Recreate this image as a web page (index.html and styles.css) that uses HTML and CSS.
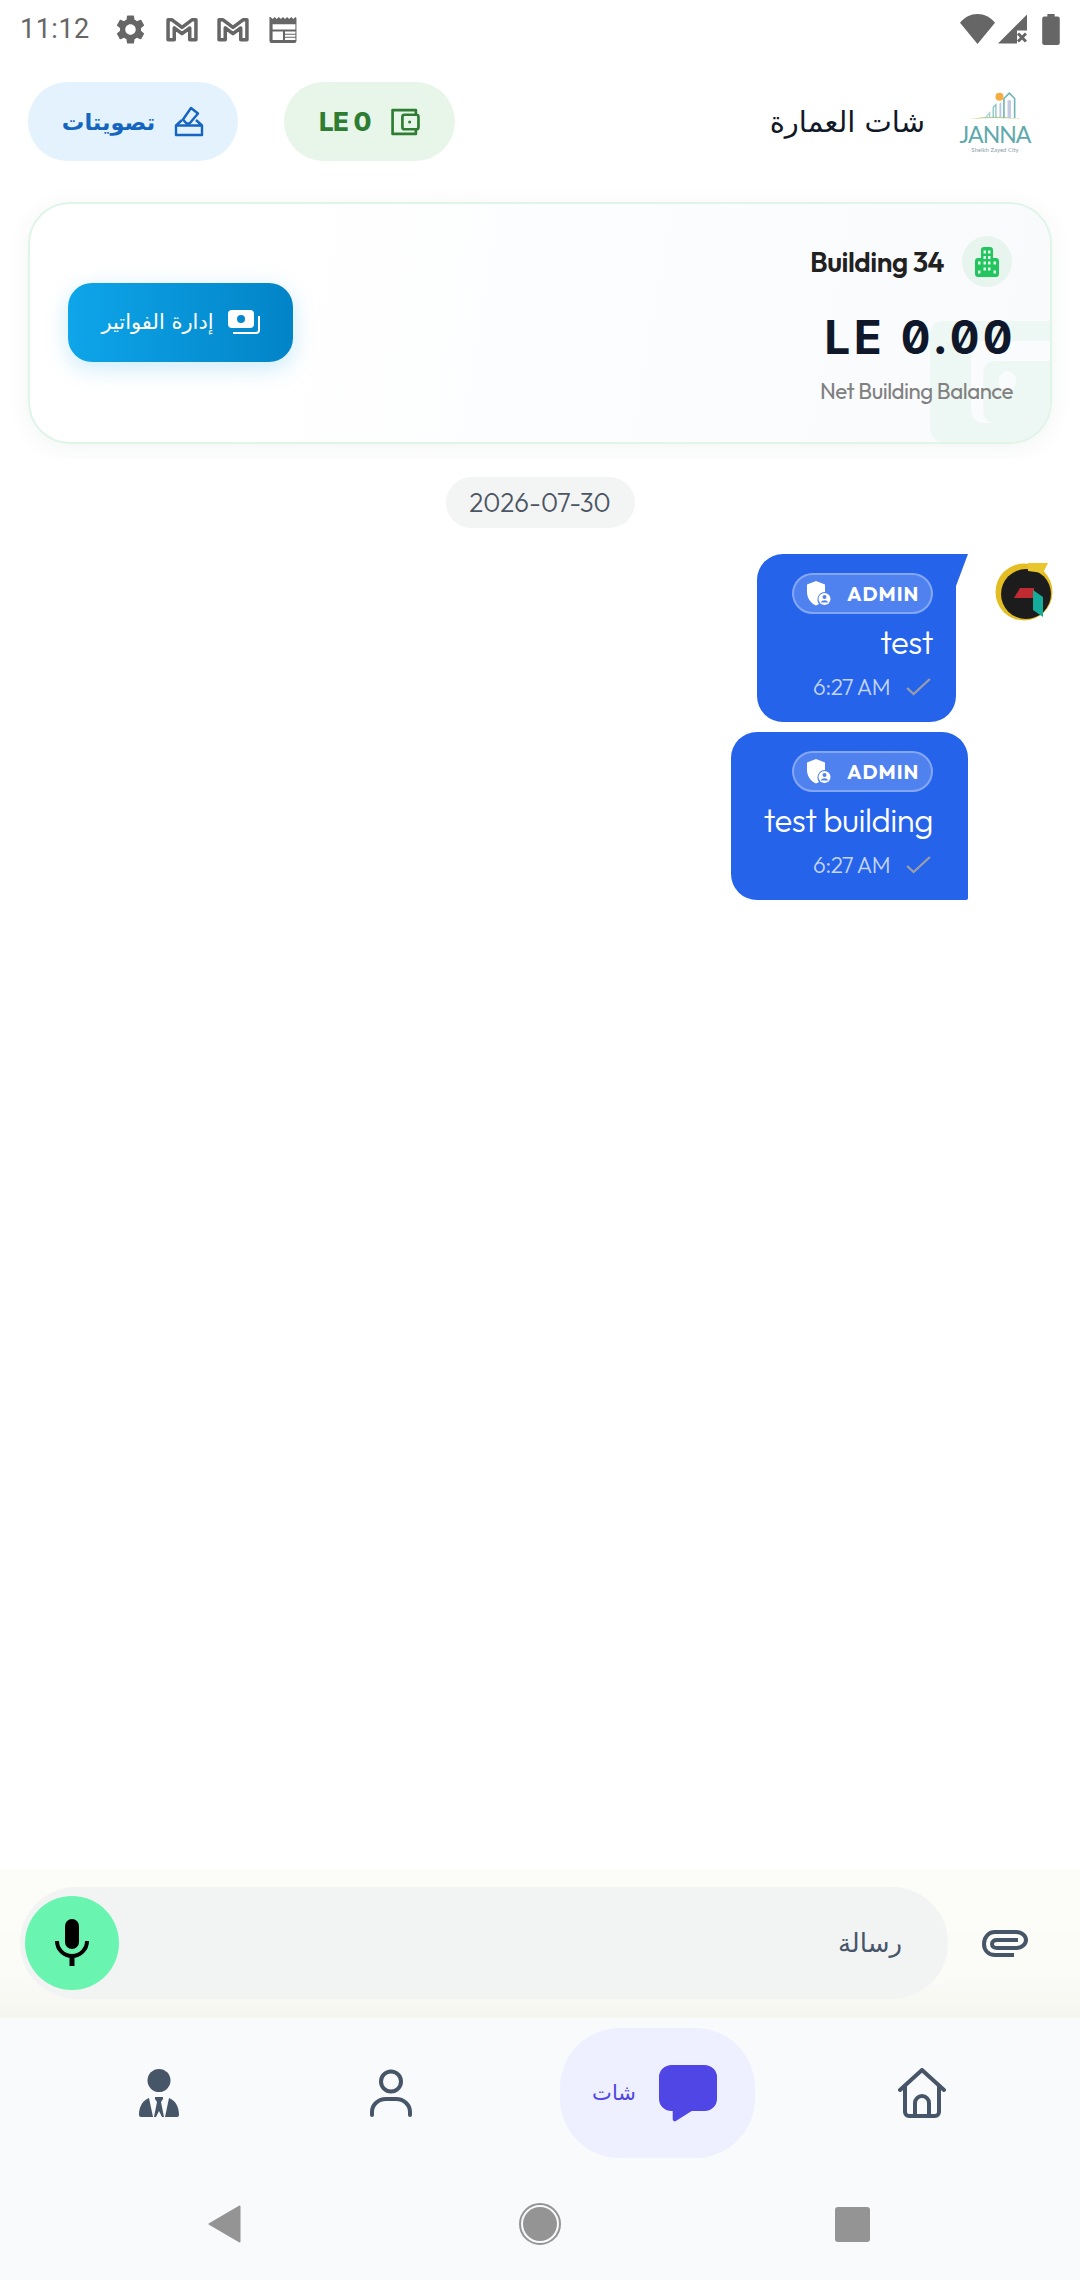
FILE: index.html
```html
<!DOCTYPE html>
<html lang="ar">
<head>
    <meta charset="UTF-8">
    <meta name="viewport" content="width=device-width, initial-scale=1.0">
    <title>شات العمارة</title>
    <link rel="stylesheet" href="styles.css">
</head>
<body>
    <div class="app">
        <!-- Status bar -->
        <div class="status-bar">
            <span class="status-time">11:12</span>
            <svg class="st-gear" viewBox="0 0 24 24"><path fill="#666" d="M19.14 12.94c.04-.3.06-.61.06-.94 0-.32-.02-.64-.07-.94l2.03-1.58c.18-.14.23-.41.12-.61l-1.92-3.32c-.12-.22-.37-.29-.59-.22l-2.39.96c-.5-.38-1.03-.7-1.62-.94l-.36-2.54c-.04-.24-.24-.41-.48-.41h-3.84c-.24 0-.43.17-.47.41l-.36 2.54c-.59.24-1.13.57-1.62.94l-2.39-.96c-.22-.08-.47 0-.59.22L2.74 8.87c-.12.21-.08.47.12.61l2.03 1.58c-.05.3-.09.63-.09.94s.02.64.07.94l-2.03 1.58c-.18.14-.23.41-.12.61l1.92 3.32c.12.22.37.29.59.22l2.39-.96c.5.38 1.03.7 1.62.94l.36 2.54c.05.24.24.41.48.41h3.84c.24 0 .44-.17.47-.41l.36-2.54c.59-.24 1.13-.56 1.62-.94l2.39.96c.22.08.47 0 .59-.22l1.92-3.32c.12-.22.07-.47-.12-.61l-2.01-1.58zM12 15.6c-1.98 0-3.6-1.62-3.6-3.6s1.62-3.6 3.6-3.6 3.6 1.62 3.6 3.6-1.62 3.6-3.6 3.6z"/></svg>
            <svg class="st-gmail" viewBox="0 0 31 25"><path fill="none" stroke="#666" stroke-width="3.400" stroke-linejoin="round" d="M2 23V3.500h3.500L15.500 11 25.500 3.500H29V23h-6V11.500l-7.500 5.500-7.500-5.500V23z"/></svg>
            <svg class="st-gmail st-gmail-2" viewBox="0 0 31 25"><path fill="none" stroke="#666" stroke-width="3.400" stroke-linejoin="round" d="M2 23V3.500h3.500L15.500 11 25.500 3.500H29V23h-6V11.500l-7.500 5.500-7.500-5.500V23z"/></svg>
            <svg class="st-news" viewBox="0 0 28 26"><path fill="#666" d="M1 1l2 2 2-2 2 2 2-2 2 2 2-2 2 2 2-2 2 2 2-2 2 2 2-2 1 1v22a2 2 0 0 1-2 2H2a2 2 0 0 1-2-2V1zM3 8v5h22V8zm0 7v8h10v-8zm12 0v2h10v-2zm0 3v2h10v-2zm0 3v2h10v-2z"/></svg>
            <div class="status-right">
                <svg class="st-wifi" viewBox="0 0 34 29"><path fill="#666" d="M17 29L0 8.500C4.500 3.200 10.500 0 17 0s12.500 3.200 17 8.500z"/></svg>
                <svg class="st-signal" viewBox="0 0 29 29"><path fill="#666" d="M29 0v16H19v13H0z"/><path stroke="#666" stroke-width="3" d="M20 19l8 8m0-8l-8 8"/></svg>
                <svg class="st-battery" viewBox="0 0 17 30"><path fill="#666" d="M5 0h7v2.500h3a2 2 0 0 1 2 2V28a2 2 0 0 1-2 2H2a2 2 0 0 1-2-2V4.500a2 2 0 0 1 2-2h3z"/></svg>
            </div>
        </div>

        <!-- Header -->
        <header class="top-header">
            <div class="header-actions">
                <div class="pill pill-vote">
                    <span class="pill-label-ar">تصويتات</span>
                    <svg width="30" height="31" viewBox="0 0 30 31" fill="none" stroke="#1565c0" stroke-width="2.400" stroke-linejoin="round"><path d="M2 19.500L8 14M22 14l6 5.500M2 19.500h26V29H2z"/><path d="M9 13.500L17 2l7 5.500-8.500 10h-3z"/></svg>
                </div>
                <div class="pill pill-wallet">
                    <span class="pill-label">LE 0</span>
                    <svg width="30" height="30" viewBox="0 0 29 28" fill="none" stroke="#2e7d32" stroke-width="2.600" stroke-linejoin="round"><path d="M25 7V2.500H2.500v23H25V21"/><rect x="12" y="7" width="15.500" height="14" rx="2"/><circle cx="19" cy="14" r="1.500" fill="#2e7d32" stroke="none"/></svg>
                </div>
            </div>
            <div class="header-title">
                <h1>شات العمارة</h1>
                <div class="logo">
                    <svg width="50" height="31" viewBox="0 0 56 34">
                        <path d="M0 31q28-5 56 0q-28-2-56 0z" fill="#b9cf7d"/>
                        <circle cx="33" cy="6" r="4.500" fill="#f5ad42"/>
                        <path d="M38 30V8l6-6 6 6v22" fill="none" stroke="#6eb5b5" stroke-width="1.800"/>
                        <path d="M33 30V14l2-2v18" fill="#b8c3dc"/>
                        <path d="M42 30V10h4v20z" fill="#c3cbe0"/>
                        <path d="M26 30V18l3-3v15" fill="none" stroke="#8cc4c4" stroke-width="1.500"/>
                        <path d="M17 30l5-6v6" fill="none" stroke="#a7d3d3" stroke-width="1.500"/>
                    </svg>
                    <span class="logo-name">JANNA</span>
                    <span class="logo-sub">Sheikh Zayed City</span>
                </div>
            </div>
        </header>

        <!-- Balance card -->
        <div class="card-wrap">
            <section class="balance-card">
                <svg class="card-watermark" viewBox="0 0 135 121" preserveAspectRatio="none"><path fill="#edf7f3" d="M14 0h121v121H14a14 14 0 0 1-14-14V14A14 14 0 0 1 14 0z"/><path fill="#fafbfd" d="M46 20h89v20H72a12 12 0 0 0-12 12v38a12 12 0 0 0 12 12h63v0H60a14 14 0 0 1-14-14z"/><circle cx="87" cy="60" r="10" fill="#fafbfd"/></svg>
                <button class="bills-btn">
                    <span>إدارة الفواتير</span>
                    <svg width="32" height="25" viewBox="0 0 32 25"><rect x="0" y="0" width="26" height="18" rx="4" fill="#fff"/><circle cx="13" cy="9" r="4" fill="#0688cc"/><path d="M31 6v14a3 3 0 0 1-3 3H5" fill="none" stroke="#fff" stroke-width="2"/></svg>
                </button>
                <div class="balance-info">
                    <div class="building-row">
                        <span class="building-name">Building 34</span>
                        <span class="building-icon">
                            <svg width="24" height="30" viewBox="0 0 24 30"><path fill="#22c55e" fill-rule="evenodd" d="M6 3a3 3 0 0 1 3-3h6a3 3 0 0 1 3 3v8h3a3 3 0 0 1 3 3v13a3 3 0 0 1-3 3H3a3 3 0 0 1-3-3V14a3 3 0 0 1 3-3h3zM8.500 3.500v3h2.500v-3zm4.500 0v3h2.500v-3zM8.500 9v3h2.500V9zm4.500 0v3h2.500V9zM3 14.500v3h2.500v-3zm5.500 0v3h2.500v-3zm4.500 0v3h2.500v-3zm5.500 0v3H21v-3zM3 23.500v3h2.500v-3zm5.500-3v3h2.500v-3zm4.500 0v3h2.500v-3zm5.500 3v3H21v-3z"/></svg>
                        </span>
                    </div>
                    <div class="balance-amount">LE 0.00</div>
                    <div class="balance-label">Net Building Balance</div>
                </div>
            </section>
        </div>

        <!-- Messages -->
        <main class="chat">
            <div class="date-chip">2026-07-30</div>
            <div class="msg-row">
                <div class="bubble bubble-first">
                    <div class="admin-badge">
                        <svg width="24" height="25" viewBox="0 0 24 25"><path fill="#fff" d="M9 0l9 3.500V11a7.500 7.500 0 0 0-6 12l-3 1.500C3.500 22 0 17 0 11V3.500z"/><circle cx="17.500" cy="18" r="6" fill="#fff"/><circle cx="17.500" cy="16" r="2" fill="#5582f0"/><path d="M13.800 21.500a3.800 3 0 0 1 7.400 0z" fill="#5582f0"/></svg>
                        <span>ADMIN</span>
                    </div>
                    <p class="msg-text">test</p>
                    <div class="msg-meta">
                        <span>6:27 AM</span>
                        <svg width="25" height="18" viewBox="0 0 23 18" preserveAspectRatio="none"><path d="M1 10l6 6L22 1" fill="none" stroke="#9b9ea8" stroke-width="2"/></svg>
                    </div>
                </div>
                <svg class="avatar" viewBox="0 0 58 58">
                    <circle cx="29" cy="29" r="28.500" fill="#e3bd22"/>
                    <circle cx="31" cy="31" r="25" fill="#1c1c1c"/>
                    <path d="M33 0h20l-5 10-15-2z" fill="#e9c62e"/>
                    <path d="M19 35l6-10h14v10z" fill="#bf2b30"/>
                    <path d="M38 27l10 7v20l-10-7z" fill="#14ad9b"/>
                </svg>
            </div>
            <div class="msg-row msg-row-second">
                <div class="bubble bubble-second">
                    <div class="admin-badge">
                        <svg width="24" height="25" viewBox="0 0 24 25"><path fill="#fff" d="M9 0l9 3.500V11a7.500 7.500 0 0 0-6 12l-3 1.500C3.500 22 0 17 0 11V3.500z"/><circle cx="17.500" cy="18" r="6" fill="#fff"/><circle cx="17.500" cy="16" r="2" fill="#5582f0"/><path d="M13.800 21.500a3.800 3 0 0 1 7.400 0z" fill="#5582f0"/></svg>
                        <span>ADMIN</span>
                    </div>
                    <p class="msg-text">test building</p>
                    <div class="msg-meta">
                        <span>6:27 AM</span>
                        <svg width="25" height="18" viewBox="0 0 23 18" preserveAspectRatio="none"><path d="M1 10l6 6L22 1" fill="none" stroke="#9b9ea8" stroke-width="2"/></svg>
                    </div>
                </div>
            </div>
        </main>

        <!-- Composer -->
        <div class="composer">
            <div class="composer-input">
                <span class="mic-btn">
                    <svg width="34" height="47" viewBox="0 0 34 47"><rect x="10" y="0" width="14" height="30" rx="7" fill="#000"/><path d="M2 22a15 15 0 0 0 30 0" fill="none" stroke="#000" stroke-width="4"/><path d="M17 36v11" stroke="#000" stroke-width="5"/></svg>
                </span>
                <span class="composer-placeholder">رسالة</span>
            </div>
            <svg class="clip" width="46" height="27" viewBox="0 0 46 27" fill="none" stroke="#475569" stroke-width="4"><path d="M32 25H13C6 25 2 20 2 14S6 2 13 2h21c6 0 10 4 10 8s-4 8-10 8H15c-3 0-5-1.500-5-4s2-4 5-4h21"/></svg>
        </div>

        <!-- Bottom nav -->
        <nav class="bottom-nav">
            <div class="nav-tabs">
                <div class="nav-item">
                    <svg width="40" height="49" viewBox="0 0 40 49"><circle cx="20" cy="11.500" r="11.500" fill="#475569"/><path fill="#475569" d="M10 29l4 19H2a2 2 0 0 1-2-2c0-8 3-14 10-17zm20 0c7 3 10 9 10 17a2 2 0 0 1-2 2H26zM16 28h8v2l-2 3 3 15h-2l-3-6-3 6h-2l3-15-2-3z"/></svg>
                </div>
                <div class="nav-item nav-item-person">
                    <svg width="42" height="49" viewBox="0 0 42 49" fill="none" stroke="#475569" stroke-width="4" stroke-linecap="round"><circle cx="21" cy="12.500" r="10"/><path d="M2 46v-3a14 13 0 0 1 14-13h10a14 13 0 0 1 14 13v3"/></svg>
                </div>
                <div class="nav-item nav-active">
                    <span class="nav-active-label">شات</span>
                    <svg width="58" height="57" viewBox="0 0 55 57" preserveAspectRatio="none"><path fill="#4f46e5" d="M12 0h31a12 12 0 0 1 12 12v22a12 12 0 0 1-12 12H31L16 56a2 2 0 0 1-3-2v-8h-1A12 12 0 0 1 0 34V12A12 12 0 0 1 12 0z"/></svg>
                </div>
                <div class="nav-item nav-item-home">
                    <svg width="48" height="50" viewBox="0 0 48 50" fill="none" stroke="#475569" stroke-width="4" stroke-linecap="round" stroke-linejoin="round"><path d="M2 22L24 2l22 20"/><path d="M7 18v26a4 4 0 0 0 4 4h26a4 4 0 0 0 4-4V18"/><path d="M17 48V35a7 7 0 0 1 14 0v13"/></svg>
                </div>
            </div>
            <div class="sys-nav">
                <svg width="33" height="38" viewBox="0 0 33 38"><path fill="#949494" stroke="#949494" stroke-width="2" stroke-linejoin="round" d="M1.500 19L31.500 1.500v35z"/></svg>
                <svg class="sys-home" width="42" height="42" viewBox="0 0 42 42"><circle cx="21" cy="21" r="20" fill="none" stroke="#949494" stroke-width="2"/><circle cx="21" cy="21" r="17" fill="#949494"/></svg>
                <span class="sys-square"></span>
            </div>
        </nav>
    </div>
</body>
</html>
```

FILE: styles.css
```css
* {
    margin: 0;
    padding: 0;
    box-sizing: border-box;
}

body {
    font-family: 'Outfit', 'Lexend', 'Inter', 'DejaVu Sans', sans-serif;
    background-color: #fff;
}

svg {
    display: block;
    flex-shrink: 0;
}

.app {
    width: 1080px;
    height: 2280px;
    display: flex;
    flex-direction: column;
    overflow: hidden;
}

/* Status bar */
.status-bar {
    height: 56px;
    display: flex;
    align-items: center;
    padding: 2px 20px 0 20px;
}

.status-time {
    font-family: 'Roboto', sans-serif;
    font-size: 27px;
    color: #666;
    width: 67px;
    letter-spacing: 0.5px;
    white-space: nowrap;
}

.st-gear {
    width: 35px;
    height: 35px;
    margin-left: 26px;
}

.st-gmail {
    width: 32px;
    height: 26px;
    margin-left: 18px;
}

.st-gmail-2 {
    margin-left: 19px;
}

.st-news {
    width: 30px;
    height: 27px;
    margin-left: 20px;
}

.status-right {
    margin-left: auto;
    display: flex;
    align-items: center;
}

.st-wifi {
    width: 35px;
    height: 30px;
}

.st-signal {
    width: 29px;
    height: 30px;
    margin-left: 3px;
}

.st-battery {
    width: 18px;
    height: 31px;
    margin-left: 15px;
}

/* Header */
.top-header {
    display: flex;
    justify-content: space-between;
    align-items: center;
    padding: 26px 45px 0 28px;
}

.header-actions {
    display: flex;
    gap: 46px;
}

.pill {
    height: 79px;
    border-radius: 40px;
    display: flex;
    align-items: center;
    justify-content: center;
    gap: 19px;
}

.pill-vote {
    width: 210px;
    background-color: #e3f2fd;
    color: #1565c0;
}

.pill-wallet {
    width: 171px;
    background-color: #e8f5e9;
    color: #2e7d32;
}

.pill-label-ar {
    font-family: 'DejaVu Sans', sans-serif;
    font-size: 22.500px;
    font-weight: 700;
}

.pill-label {
    font-family: 'Inter', sans-serif;
    font-size: 26px;
    font-weight: 800;
    letter-spacing: -0.500px;
}

.header-title {
    display: flex;
    align-items: center;
    gap: 30px;
}

.header-title h1 {
    font-family: 'DejaVu Sans', sans-serif;
    font-size: 29px;
    font-weight: 400;
    color: #111827;
}

.logo {
    width: 80px;
    display: flex;
    flex-direction: column;
    align-items: center;
}

.logo-name {
    font-family: 'Lato', sans-serif;
    font-size: 23px;
    line-height: 24px;
    letter-spacing: -1px;
    color: #5fa9ad;
}

.logo-sub {
    font-family: 'Lato', sans-serif;
    font-size: 6px;
    line-height: 7px;
    color: #8aa0a8;
}

/* Balance card */
.card-wrap {
    padding: 41px 28px 15px;
    background-color: #fff;
    overflow: hidden;
}

.balance-card {
    position: relative;
    height: 242px;
    border: 2px solid #dff5e8;
    border-radius: 42px;
    background: linear-gradient(100deg, #fff 20%, #fcfdfe 50%, #f9fafc 100%);
    box-shadow: 0 4px 24px rgba(30, 70, 50, 0.06);
    display: flex;
    justify-content: space-between;
    align-items: center;
    padding: 0 25px 0 38px;
}

.card-watermark {
    position: absolute;
    right: 0;
    bottom: 0;
    width: 120px;
    height: 121px;
    border-bottom-right-radius: 40px;
}

.bills-btn {
    width: 225px;
    height: 79px;
    border: none;
    border-radius: 24px;
    margin-bottom: 2px;
    background: linear-gradient(90deg, #0ea5e9, #0284c7);
    box-shadow: 0 6px 22px rgba(14, 165, 233, 0.22);
    color: #fff;
    display: flex;
    align-items: center;
    justify-content: center;
    gap: 14px;
    font-family: 'DejaVu Sans', sans-serif;
    font-size: 21px;
    font-weight: 400;
}

.balance-info {
    position: relative;
    display: flex;
    flex-direction: column;
    align-items: flex-end;
    margin-right: 12px;
}

.building-row {
    display: flex;
    align-items: center;
    gap: 18px;
    margin-top: -5px;
    margin-right: 1px;
}

.building-name {
    font-size: 28px;
    font-weight: 600;
    color: #212121;
    letter-spacing: -0.500px;
}

.building-icon {
    width: 50px;
    height: 51px;
    border-radius: 50%;
    background-color: #e8f5ee;
    display: flex;
    align-items: center;
    justify-content: center;
}

/* Inter with its slashed zero, spaced out to read as a mono face */
.balance-amount {
    font-family: 'Inter', 'DejaVu Sans Mono', monospace;
    font-feature-settings: "zero", "tnum";
    font-size: 46px;
    font-weight: 700;
    letter-spacing: 3.400px;
    line-height: 52px;
    color: #0f172a;
    margin-top: 24px;
    margin-right: -3px;
}

.balance-label {
    font-size: 22.300px;
    color: #808080;
    letter-spacing: -0.500px;
    margin-top: 14px;
}

/* Messages */
.chat {
    flex: 1;
    display: flex;
    flex-direction: column;
    align-items: center;
    padding-top: 18px;
}

.date-chip {
    width: 189px;
    height: 51px;
    border-radius: 26px;
    background-color: #f3f4f4;
    color: #4b5563;
    font-size: 26px;
    font-weight: 300;
    line-height: 51px;
    text-align: center;
}

.msg-row {
    align-self: stretch;
    display: flex;
    justify-content: flex-end;
    margin-top: 26px;
    padding-right: 27px;
}

.msg-row-second {
    margin-top: 10px;
    padding-right: 112px;
}

.bubble {
    position: relative;
    background-color: #2563eb;
    color: #fff;
    height: 168px;
    display: flex;
    flex-direction: column;
    align-items: flex-end;
    padding-top: 19px;
}

.bubble-first {
    width: 199px;
    margin-right: 39px;
    padding-right: 23px;
    border-radius: 26px 0 26px 26px;
}

/* tail of the first bubble */
.bubble-first::after {
    content: "";
    position: absolute;
    top: 0;
    right: -12px;
    width: 12px;
    height: 32px;
    background-color: #2563eb;
    clip-path: polygon(0 0, 100% 0, 0 100%);
}

.bubble-second {
    width: 237px;
    padding-right: 35px;
    border-radius: 26px 26px 2px 26px;
}

.avatar {
    width: 58px;
    height: 58px;
    margin-top: 9px;
}

.admin-badge {
    width: 141px;
    height: 41px;
    border: 2px solid rgba(255, 255, 255, 0.3);
    border-radius: 21px;
    background-color: rgba(255, 255, 255, 0.2);
    display: flex;
    align-items: center;
    padding-left: 13px;
    gap: 16px;
    font-size: 20px;
    font-weight: 700;
    letter-spacing: 1px;
}

.msg-text {
    font-size: 33px;
    font-weight: 300;
    line-height: 40px;
    margin-top: 8px;
    letter-spacing: -0.500px;
}

.msg-meta {
    display: flex;
    align-items: center;
    gap: 16px;
    font-size: 22.500px;
    font-weight: 300;
    letter-spacing: -0.500px;
    color: #c3d5fb;
    margin-top: 10px;
    margin-right: 2px;
}

/* Composer */
.composer {
    height: 149px;
    background: linear-gradient(180deg, #fcfdf9 0%, #fbfcf7 70%, #f6f6f1 100%);
    display: flex;
    align-items: center;
    padding: 0 52px 0 20px;
    justify-content: space-between;
}

.composer-input {
    width: 928px;
    height: 112px;
    border-radius: 56px;
    background-color: #f2f4f4;
    display: flex;
    align-items: center;
    justify-content: space-between;
    padding: 0 46px 0 5px;
    margin-bottom: 2px;
}

.mic-btn {
    width: 94px;
    height: 94px;
    border-radius: 50%;
    background-color: #69f4b0;
    display: flex;
    align-items: center;
    justify-content: center;
}

.composer-placeholder {
    font-family: 'DejaVu Sans', sans-serif;
    font-size: 26px;
    color: #475569;
}

/* Bottom nav */
.bottom-nav {
    height: 262px;
    background-color: #f8fafc;
    display: flex;
    flex-direction: column;
}

.nav-tabs {
    display: flex;
    align-items: center;
    height: 130px;
    margin-top: 10px;
    padding-left: 109px;
}

.nav-item {
    width: 100px;
    display: flex;
    justify-content: center;
    align-items: center;
}

.nav-item-person {
    margin-left: 132px;
}

.nav-active {
    width: 195px;
    height: 130px;
    margin-left: 119px;
    padding-right: 6px;
    border-radius: 60px;
    background-color: #eef0ff;
    gap: 23px;
}

.nav-active-label {
    font-family: 'DejaVu Sans', sans-serif;
    font-size: 21px;
    color: #4f46e5;
}

.nav-item-home {
    margin-left: 117px;
}

.sys-nav {
    display: flex;
    align-items: center;
    padding: 45px 0 0 208px;
}

.sys-home {
    margin-left: 278px;
}

.sys-square {
    width: 35px;
    height: 35px;
    margin-left: 274px;
    border-radius: 3px;
    background-color: #949494;
}
```
